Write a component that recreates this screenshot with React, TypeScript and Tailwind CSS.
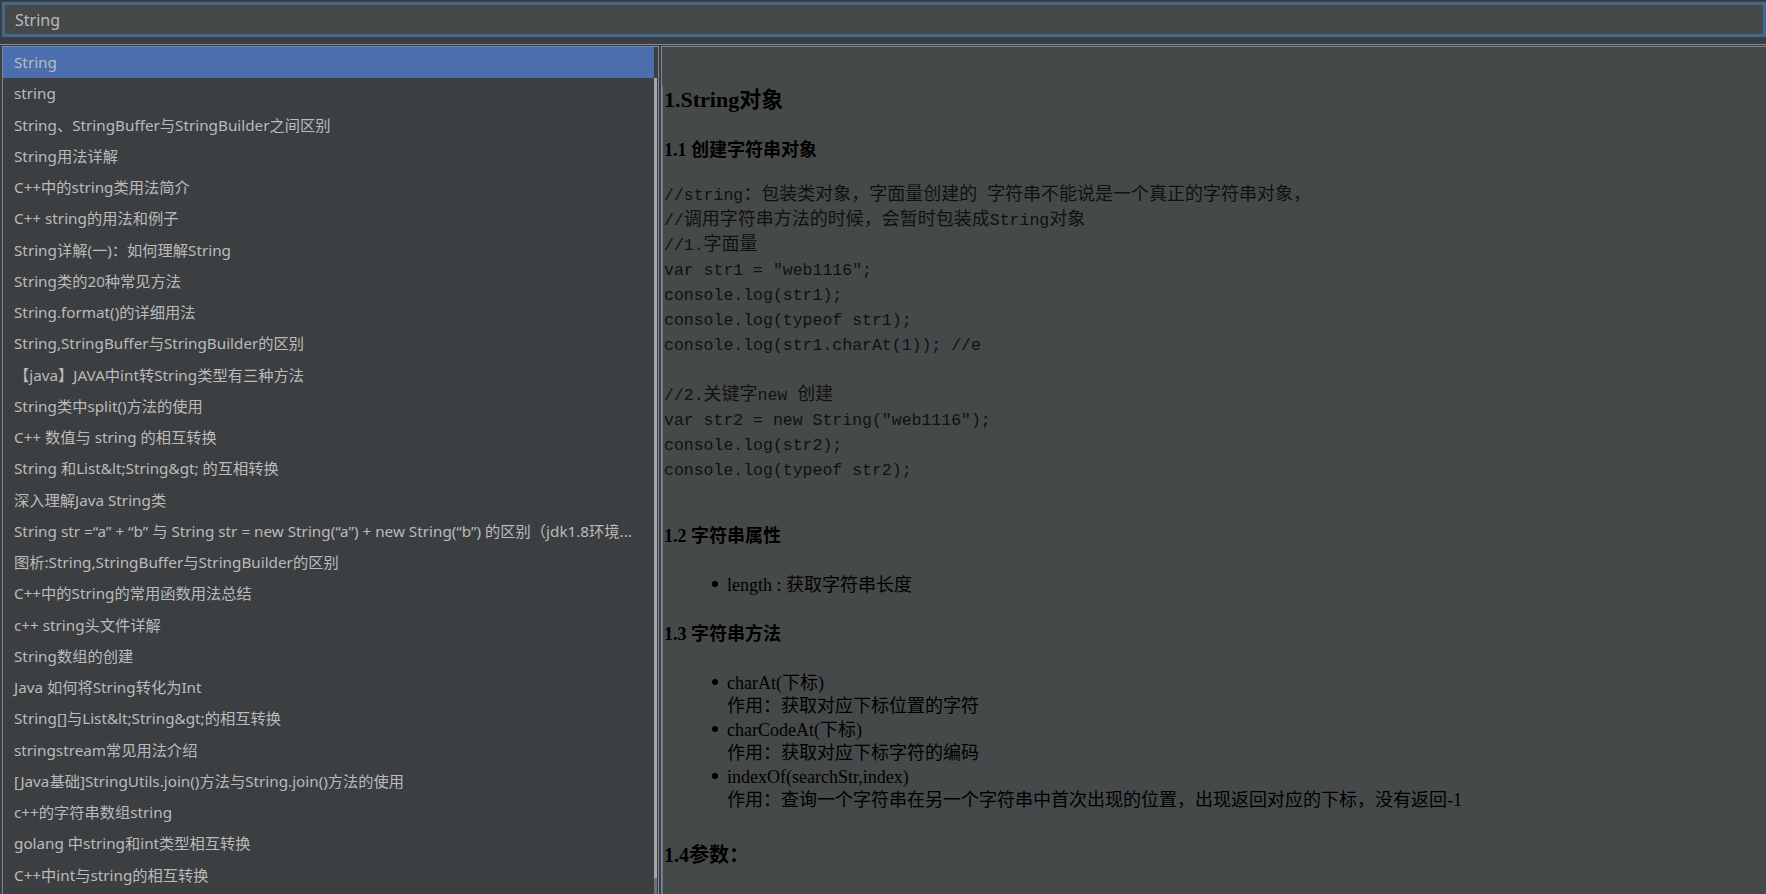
const ITEMS = [
  'String',
  'string',
  'String、StringBuffer与StringBuilder之间区别',
  'String用法详解',
  'C++中的string类用法简介',
  'C++ string的用法和例子',
  'String详解(一)：如何理解String',
  'String类的20种常见方法',
  'String.format()的详细用法',
  'String,StringBuffer与StringBuilder的区别',
  '【java】JAVA中int转String类型有三种方法',
  'String类中split()方法的使用',
  'C++ 数值与 string 的相互转换',
  'String 和List&lt;String&gt; 的互相转换',
  '深入理解Java String类',
  'String str =“a” + “b” 与 String str = new String(“a”) + new String(“b”) 的区别（jdk1.8环境...',
  '图析:String,StringBuffer与StringBuilder的区别',
  'C++中的String的常用函数用法总结',
  'c++ string头文件详解',
  'String数组的创建',
  'Java 如何将String转化为Int',
  'String[]与List&lt;String&gt;的相互转换',
  'stringstream常见用法介绍',
  '[Java基础]StringUtils.join()方法与String.join()方法的使用',
  'c++的字符串数组string',
  'golang 中string和int类型相互转换',
  'C++中int与string的相互转换',
]

const CODE = [
  '//string：包装类对象，字面量创建的 字符串不能说是一个真正的字符串对象，',
  '//调用字符串方法的时候，会暂时包装成String对象',
  '//1.字面量',
  'var str1 = "web1116";',
  'console.log(str1);',
  'console.log(typeof str1);',
  'console.log(str1.charAt(1)); //e',
  '',
  '//2.关键字new 创建',
  'var str2 = new String("web1116");',
  'console.log(str2);',
  'console.log(typeof str2);',
]

const METHODS = [
  { name: 'charAt(下标)', desc: '作用：获取对应下标位置的字符' },
  { name: 'charCodeAt(下标)', desc: '作用：获取对应下标字符的编码' },
  { name: 'indexOf(searchStr,index)', desc: '作用：查询一个字符串在另一个字符串中首次出现的位置，出现返回对应的下标，没有返回-1' },
]

// the CJK in the code block is drawn wider than the mono latin
const CodeLine = ({ text }: { text: string }) => {
  const parts = text.split(/([\u3000-\u9fff\uff00-\uffef]+)/)
  return (
    <div className="h-[25px] whitespace-pre">
      {parts.map((p, i) =>
        i % 2 === 1 ? (
          <span key={i} className="text-[18px]">
            {p}
          </span>
        ) : (
          <span key={i}>{p}</span>
        )
      )}
    </div>
  )
}

const Bullet = () => (
  <span className="mt-[7px] mr-[9px] h-[6px] w-[6px] flex-shrink-0 rounded-full bg-black" />
)

export default function App() {
  return (
    <div className="h-[894px] w-[1766px] overflow-hidden bg-[#3c3f41] pt-[2px]">
      {/* search field */}
      <div className="ml-[2px] flex h-[35px] items-center border-[3px] border-[#43698f] bg-[#45494a] pl-[10px] font-['Noto_Sans','Noto_Sans_CJK_SC',sans-serif] text-[16px] text-[#bbbbbb]">
        String
      </div>

      <div className="mt-[7px] flex h-[850px] border-t border-[#7d8a95] pl-[2px] pt-[1px]">
        {/* result list */}
        <div className="flex w-[657px] flex-shrink-0 border-t border-l border-r border-[#7d8a95]">
          <div className="w-[651px] font-['Noto_Sans','Noto_Sans_CJK_SC',sans-serif] text-[15.25px] text-[#bbbbbb]">
            {ITEMS.map((item, i) => (
              <div
                key={i}
                className={
                  i === 0
                    ? 'h-[31.25px] truncate bg-[#4b6eaf] pl-[11px] pr-[1px] leading-[31.25px]'
                    : 'h-[31.25px] truncate pl-[11px] pr-[1px] leading-[31.25px]'
                }
              >
                {item}
              </div>
            ))}
          </div>
          <div className="flex w-[3px] flex-col">
            <div className="h-[31px]" />
            <div className="h-[800px] bg-[#a3a6a9]" />
            <div className="flex-1 bg-[#6d7073]" />
          </div>
        </div>

        {/* preview */}
        <div className="ml-[2px] flex-1 border-t border-l border-[#7d8a95] bg-[#45494a]">
          <div className="h-full border-l border-[#5b7594] pl-[1px] font-['Liberation_Serif','Noto_Sans_CJK_SC',serif] text-black">
            <h1 className="mt-[38px] text-[22px] leading-[30px] font-bold">1.String对象</h1>
            <h2 className="mt-[23px] text-[18px] leading-[24px] font-bold">1.1 创建字符串对象</h2>
            <div className="mt-[21px] font-['Liberation_Mono','Noto_Sans_CJK_SC',monospace] text-[16.5px] leading-[25px] text-[#111111]">
              {CODE.map((line, i) => (
                <CodeLine key={i} text={line} />
              ))}
            </div>
            <h2 className="mt-[41px] text-[18px] leading-[24px] font-bold">1.2 字符串属性</h2>
            <div className="mt-[26px] pl-[48px] text-[18px] leading-[23.5px]">
              <div className="flex">
                <Bullet />
                <span>length : 获取字符串长度</span>
              </div>
            </div>
            <h2 className="mt-[24px] text-[18px] leading-[24px] font-bold">1.3 字符串方法</h2>
            <div className="mt-[26px] pl-[48px] text-[18px] leading-[23.6px]">
              {METHODS.map((m) => (
                <div key={m.name} className="flex">
                  <Bullet />
                  <div>
                    <div>{m.name}</div>
                    <div>{m.desc}</div>
                  </div>
                </div>
              ))}
            </div>
            <h3 className="mt-[28px] text-[20px] leading-[28px] font-bold">1.4参数：</h3>
          </div>
        </div>
      </div>
    </div>
  )
}
